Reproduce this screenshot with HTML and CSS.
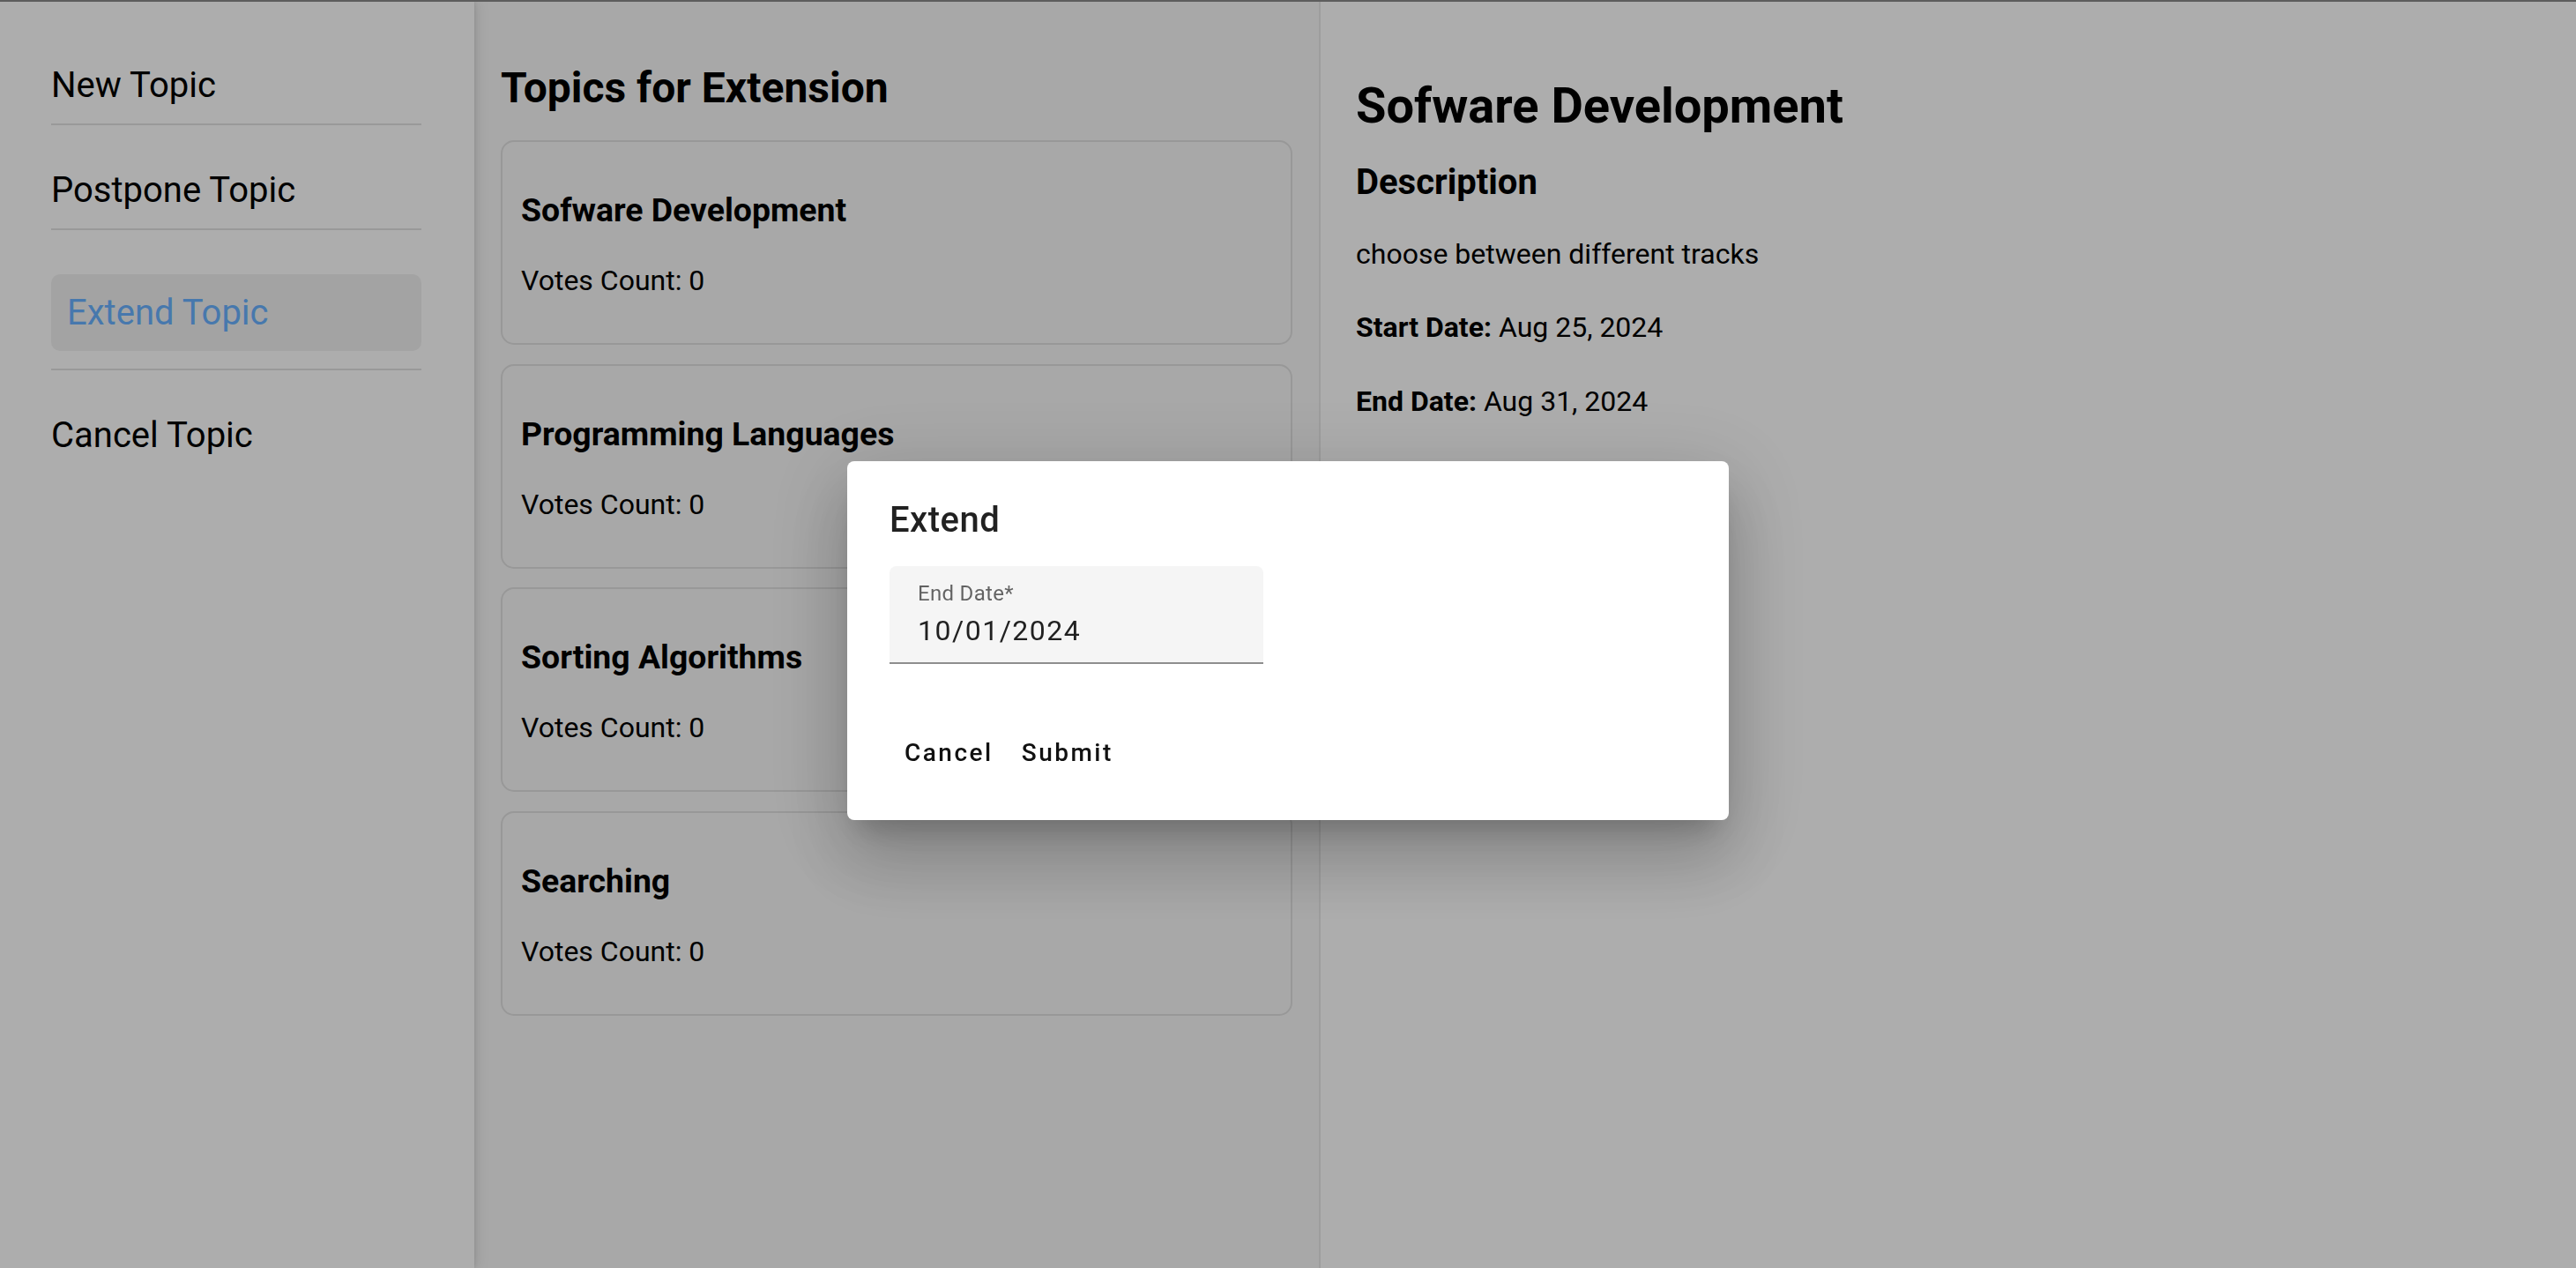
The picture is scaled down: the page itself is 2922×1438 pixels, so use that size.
FILE: index.html
```html
<!DOCTYPE html>
<html lang="en">
<head>
<meta charset="utf-8">
<title>Extend Topic</title>
<link rel="stylesheet" href="styles.css">
</head>
<body>
<div class="app">
  <nav class="sidebar">
    <ul class="menu">
      <li class="menu-item"><a class="menu-link">New Topic</a></li>
      <li class="menu-item"><a class="menu-link">Postpone Topic</a></li>
      <li class="menu-item active"><a class="menu-link">Extend Topic</a></li>
      <li class="menu-item"><a class="menu-link">Cancel Topic</a></li>
    </ul>
  </nav>
  <section class="list-col">
    <h2 class="list-title">Topics for Extension</h2>
    <div class="cards">
      <div class="card"><h3 class="card-title">Sofware Development</h3><p class="card-votes">Votes Count: 0</p></div>
      <div class="card"><h3 class="card-title">Programming Languages</h3><p class="card-votes">Votes Count: 0</p></div>
      <div class="card"><h3 class="card-title">Sorting Algorithms</h3><p class="card-votes">Votes Count: 0</p></div>
      <div class="card"><h3 class="card-title">Searching</h3><p class="card-votes">Votes Count: 0</p></div>
    </div>
  </section>
  <section class="detail">
    <h1 class="detail-title">Sofware Development</h1>
    <h2 class="detail-sub">Description</h2>
    <p class="detail-line">choose between different tracks</p>
    <p class="detail-line"><strong>Start Date:</strong> Aug 25, 2024</p>
    <p class="detail-line"><strong>End Date:</strong> Aug 31, 2024</p>
  </section>
</div>
<div class="backdrop">
  <div class="dialog">
    <h2 class="dialog-title">Extend</h2>
    <div class="field">
      <span class="field-label">End Date*</span>
      <span class="field-value">10/01/2024</span>
    </div>
    <div class="actions">
      <button class="btn">Cancel</button>
      <button class="btn">Submit</button>
    </div>
  </div>
</div>
</body>
</html>
```

FILE: styles.css
```css
* { box-sizing: border-box; }

html, body {
  margin: 0;
  padding: 0;
  height: 100%;
}

body {
  font-family: Roboto, "Liberation Sans", Arial, sans-serif;
  color: #000;
  background: #fff;
  border-top: 2px solid #8a8a8a;
  overflow: hidden;
}

.app {
  display: flex;
  height: 100%;
}

/* Sidebar */
.sidebar {
  width: 538px;
  flex: 0 0 538px;
  background: #fff;
  padding: 51px 60px 0 58px;
  position: relative;
  z-index: 1;
  box-shadow: 2px 0 16px rgba(0, 0, 0, 0.12), 1px 0 4px rgba(0, 0, 0, 0.08);
}

.menu {
  list-style: none;
  margin: 0;
  padding: 0;
}

.menu-item {
  border-bottom: 2px solid #e2e2e2;
}
.menu-item + .menu-item { padding-top: 30px; }
.menu-item:last-child { border-bottom: 0; }

.menu-link {
  display: block;
  font-size: 40px;
  line-height: 47px;
  padding: 20px 0;
  color: #000;
}

.menu-item.active .menu-link {
  margin: 20px 0;
  padding: 20px 18px;
  background: #f1f1f1;
  border-radius: 10px;
  color: rgb(105, 178, 255);
}

/* Middle column */
.list-col {
  width: 960px;
  flex: 0 0 960px;
  background: #f8f8f8;
  border-right: 2px solid #e8e8e8;
  padding: 70px 30px 0 30px;
}

.list-title {
  margin: 0 0 31px;
  font-size: 48px;
  line-height: 56px;
  font-weight: 700;
}

.cards {
  display: flex;
  flex-direction: column;
  gap: 21.5px;
}

.card {
  border: 2px solid #e0e0e0;
  border-radius: 15px;
  padding: 55px 21px 52px;
}

.card-title {
  margin: 0 0 40px;
  font-size: 37.4px;
  line-height: 44px;
  font-weight: 700;
}

.card-votes {
  margin: 0;
  font-size: 32px;
  line-height: 37px;
}

/* Detail column */
.detail {
  flex: 1;
  background: #fff;
  padding: 84.5px 40px 0 40px;
}

.detail-title {
  margin: 0 0 30.5px;
  font-size: 56px;
  line-height: 66px;
  font-weight: 700;
}

.detail-sub {
  margin: 0 0 40px;
  font-size: 40px;
  line-height: 47px;
  font-weight: 700;
}

.detail-line {
  margin: 0 0 46.4px;
  font-size: 32px;
  line-height: 37px;
}

.detail-line strong { font-weight: 700; }

/* Dialog */
.backdrop {
  position: fixed;
  inset: 0;
  background: rgba(0, 0, 0, 0.32);
  display: flex;
  align-items: center;
  justify-content: center;
  padding-top: 15px;
  z-index: 10;
}

.dialog {
  width: 1000px;
  background: #fff;
  border-radius: 8px;
  padding: 35px 48px 41px 48px;
  box-shadow: 0 22px 30px -14px rgba(0, 0, 0, 0.2),
              0 48px 76px 6px rgba(0, 0, 0, 0.14),
              0 18px 92px 16px rgba(0, 0, 0, 0.12);
}

.dialog-title {
  margin: 0 0 20px;
  font-size: 40px;
  line-height: 64px;
  font-weight: 500;
  letter-spacing: 0.5px;
  color: rgba(0, 0, 0, 0.87);
}

.field {
  width: 424px;
  height: 111px;
  background: #f5f5f5;
  border-radius: 8px 8px 0 0;
  border-bottom: 2px solid rgba(0, 0, 0, 0.42);
  padding: 17px 32px 0 32px;
  display: flex;
  flex-direction: column;
}

.field-label {
  font-size: 24px;
  line-height: 28px;
  color: rgba(0, 0, 0, 0.6);
  letter-spacing: 0.3px;
}

.field-value {
  margin-top: 9.5px;
  font-size: 32px;
  line-height: 37px;
  letter-spacing: 1.5px;
  color: rgba(0, 0, 0, 0.87);
}

.actions {
  display: flex;
  padding-top: 64px;
  margin-left: 1px;
}

.btn {
  height: 72px;
  padding: 0 16px;
  border: 0;
  background: transparent;
  font-family: Roboto, "Liberation Sans", Arial, sans-serif;
  font-size: 28px;
  font-weight: 500;
  letter-spacing: 2.5px;
  color: #111;
  border-radius: 8px;
}
```
